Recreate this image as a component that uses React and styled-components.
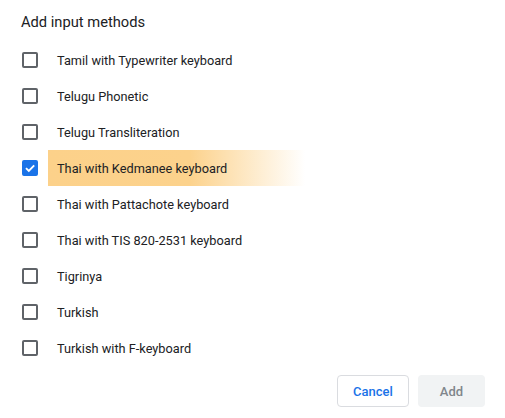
import React from 'react'
import styled, { createGlobalStyle } from 'styled-components'

const methods = [
  { name: 'Tamil with Typewriter keyboard' },
  { name: 'Telugu Phonetic' },
  { name: 'Telugu Transliteration' },
  { name: 'Thai with Kedmanee keyboard', checked: true, highlight: true },
  { name: 'Thai with Pattachote keyboard' },
  { name: 'Thai with TIS 820-2531 keyboard' },
  { name: 'Tigrinya' },
  { name: 'Turkish' },
  { name: 'Turkish with F-keyboard' },
]

const App = () => {
  return (
    <>
      <Global />
      <Dialog>
        <Title>Add input methods</Title>
        <List>
          {methods.map((m) => (
            <Row key={m.name}>
              <Box checked={m.checked}>
                {m.checked && (
                  <svg width="12" height="12" viewBox="0 0 12 12">
                    <path d="M2 6.2 L4.8 9 L10.2 3.4" fill="none" stroke="#fff" strokeWidth="1.9" />
                  </svg>
                )}
              </Box>
              <Label highlight={m.highlight}>{m.name}</Label>
            </Row>
          ))}
        </List>
        <Actions>
          <CancelButton>Cancel</CancelButton>
          <AddButton disabled>Add</AddButton>
        </Actions>
      </Dialog>
    </>
  )
}

const Global = createGlobalStyle`
  body {
    margin: 0;
    background: #fff;
    font-family: Roboto, "Liberation Sans", sans-serif;
  }
`

const Dialog = styled.div`
  width: 505px;
  height: 418px;
  box-sizing: border-box;
  padding: 12px 20px 0 21px;
  display: flex;
  flex-direction: column;
`

const Title = styled.div`
  font-size: 14.7px;
  line-height: 20px;
  color: #202124;
`

const List = styled.div`
  margin-top: 10px;
  display: flex;
  flex-direction: column;
`

const Row = styled.div`
  height: 36px;
  display: flex;
  align-items: center;
`

const Box = styled.div`
  width: 16px;
  height: 16px;
  box-sizing: border-box;
  margin-left: 1px;
  border-radius: 2px;
  border: 2px solid ${(p) => (p.checked ? '#1a73e8' : '#5f6368')};
  background: ${(p) => (p.checked ? '#1a73e8' : 'transparent')};
  display: flex;
  align-items: center;
  justify-content: center;
`

const Label = styled.div`
  margin-left: 10px;
  width: 257px;
  height: 36px;
  box-sizing: border-box;
  padding-left: 9px;
  display: flex;
  align-items: center;
  font-size: 12.75px;
  color: #202124;
  background: ${(p) =>
    p.highlight
      ? 'linear-gradient(to right, #fcd18a 0%, #fcd28c 55%, rgba(255,255,255,0) 100%)'
      : 'transparent'};
`

const Actions = styled.div`
  margin-top: 9px;
  display: flex;
  justify-content: flex-end;
  gap: 9px;
`

const BaseButton = styled.button`
  height: 32px;
  border-radius: 4px;
  font-family: Roboto, "Liberation Sans", sans-serif;
  font-size: 13px;
  font-weight: 500;
  box-sizing: border-box;
  padding: 0 15px;
`

const CancelButton = styled(BaseButton)`
  width: 72px;
  background: #fff;
  border: 1px solid #dadce0;
  color: #1a73e8;
`

const AddButton = styled(BaseButton)`
  width: 67px;
  background: #f1f3f4;
  border: none;
  color: #80868b;
`

export default App
